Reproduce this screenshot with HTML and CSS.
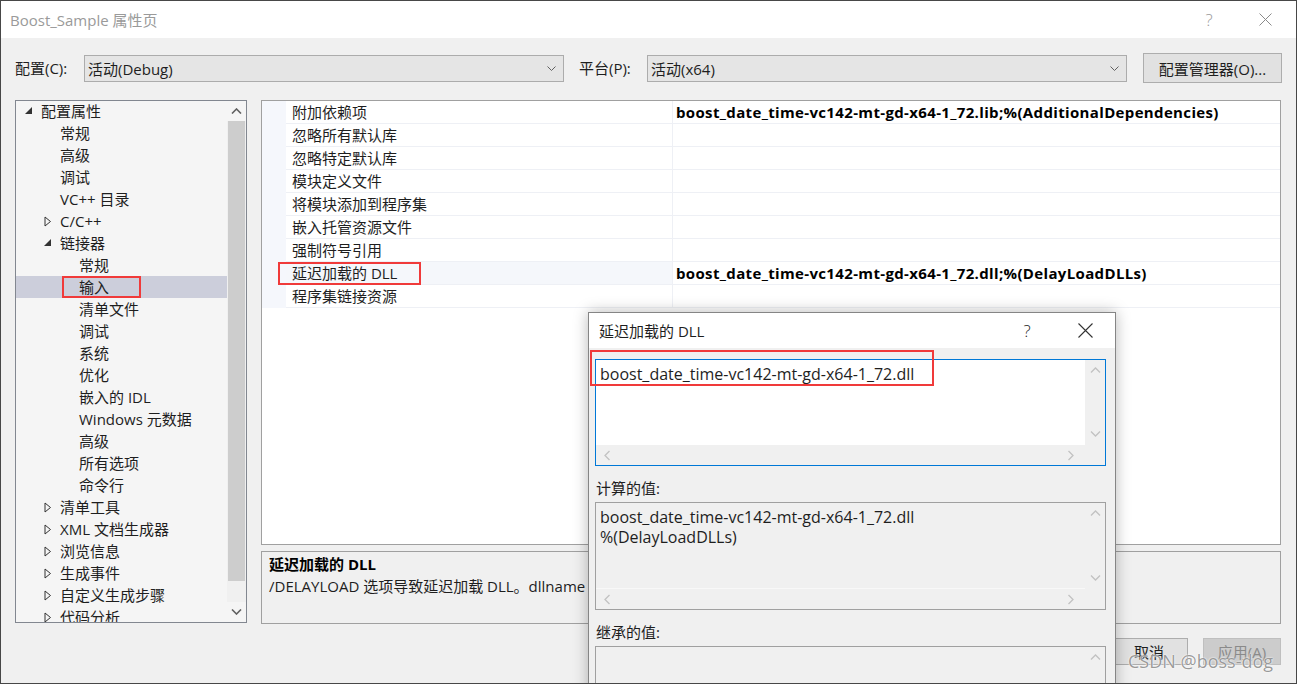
FILE: index.html
```html
<!DOCTYPE html>
<html lang="zh-CN">
<head>
    <meta charset="UTF-8">
    <title>Boost_Sample 属性页</title>
    <link rel="stylesheet" href="styles.css">
</head>
<body>
<div class="window">
    <div class="titlebar">
        <span class="title">Boost_Sample 属性页</span>
        <div class="tb-btns">
            <span class="tb-btn help">?</span>
            <span class="tb-btn"><svg width="13" height="13" viewBox="0 0 13 13"><path d="M0.5 0.5L12.5 12.5M12.5 0.5L0.5 12.5" stroke="#8a8a8a" stroke-width="1"/></svg></span>
        </div>
    </div>

    <div class="config-row">
        <label class="lbl">配置(C):</label>
        <div class="combo"><span>活动(Debug)</span><svg width="9" height="5" viewBox="0 0 9 5"><path d="M0.5 0.5L4.5 4.5L8.5 0.5" fill="none" stroke="#606060"/></svg></div>
        <label class="lbl lbl2">平台(P):</label>
        <div class="combo"><span>活动(x64)</span><svg width="9" height="5" viewBox="0 0 9 5"><path d="M0.5 0.5L4.5 4.5L8.5 0.5" fill="none" stroke="#606060"/></svg></div>
        <button class="btn cfg-btn">配置管理器(O)...</button>
    </div>

    <div class="main">
        <div class="tree">
            <div class="tree-list">
                <div class="node l0"><span class="tog"><svg width="8" height="8" viewBox="0 0 8 8"><path d="M7 0V7H0Z" fill="#333"/></svg></span>配置属性</div>
                <div class="node l1"><span class="tog"></span>常规</div>
                <div class="node l1"><span class="tog"></span>高级</div>
                <div class="node l1"><span class="tog"></span>调试</div>
                <div class="node l1"><span class="tog"></span>VC++ 目录</div>
                <div class="node l1"><span class="tog"><svg width="8" height="11" viewBox="0 0 8 11"><path d="M1 1L6.5 5.5L1 10Z" fill="none" stroke="#333"/></svg></span>C/C++</div>
                <div class="node l1"><span class="tog"><svg width="8" height="8" viewBox="0 0 8 8"><path d="M7 0V7H0Z" fill="#333"/></svg></span>链接器</div>
                <div class="node l2"><span class="tog"></span>常规</div>
                <div class="node l2 selected"><span class="tog"></span><span class="hl hl-tree">输入</span></div>
                <div class="node l2"><span class="tog"></span>清单文件</div>
                <div class="node l2"><span class="tog"></span>调试</div>
                <div class="node l2"><span class="tog"></span>系统</div>
                <div class="node l2"><span class="tog"></span>优化</div>
                <div class="node l2"><span class="tog"></span>嵌入的 IDL</div>
                <div class="node l2"><span class="tog"></span>Windows 元数据</div>
                <div class="node l2"><span class="tog"></span>高级</div>
                <div class="node l2"><span class="tog"></span>所有选项</div>
                <div class="node l2"><span class="tog"></span>命令行</div>
                <div class="node l1"><span class="tog"><svg width="8" height="11" viewBox="0 0 8 11"><path d="M1 1L6.5 5.5L1 10Z" fill="none" stroke="#333"/></svg></span>清单工具</div>
                <div class="node l1"><span class="tog"><svg width="8" height="11" viewBox="0 0 8 11"><path d="M1 1L6.5 5.5L1 10Z" fill="none" stroke="#333"/></svg></span>XML 文档生成器</div>
                <div class="node l1"><span class="tog"><svg width="8" height="11" viewBox="0 0 8 11"><path d="M1 1L6.5 5.5L1 10Z" fill="none" stroke="#333"/></svg></span>浏览信息</div>
                <div class="node l1"><span class="tog"><svg width="8" height="11" viewBox="0 0 8 11"><path d="M1 1L6.5 5.5L1 10Z" fill="none" stroke="#333"/></svg></span>生成事件</div>
                <div class="node l1"><span class="tog"><svg width="8" height="11" viewBox="0 0 8 11"><path d="M1 1L6.5 5.5L1 10Z" fill="none" stroke="#333"/></svg></span>自定义生成步骤</div>
                <div class="node l1"><span class="tog"><svg width="8" height="11" viewBox="0 0 8 11"><path d="M1 1L6.5 5.5L1 10Z" fill="none" stroke="#333"/></svg></span>代码分析</div>
            </div>
            <div class="tree-scroll">
                <div class="arrow"><svg width="11" height="6" viewBox="0 0 11 6"><path d="M1 5.5L5.5 1L10 5.5" fill="none" stroke="#606060" stroke-width="1.6"/></svg></div>
                <div class="thumb-track"><div class="thumb"></div></div>
                <div class="arrow"><svg width="11" height="6" viewBox="0 0 11 6"><path d="M1 0.5L5.5 5L10 0.5" fill="none" stroke="#606060" stroke-width="1.6"/></svg></div>
            </div>
        </div>

        <div class="right">
            <div class="grid">
                <div class="prow"><div class="gut"></div><div class="pname">附加依赖项</div><div class="pval">boost_date_time-vc142-mt-gd-x64-1_72.lib;%(AdditionalDependencies)</div></div>
                <div class="prow"><div class="gut"></div><div class="pname">忽略所有默认库</div><div class="pval"></div></div>
                <div class="prow"><div class="gut"></div><div class="pname">忽略特定默认库</div><div class="pval"></div></div>
                <div class="prow"><div class="gut"></div><div class="pname">模块定义文件</div><div class="pval"></div></div>
                <div class="prow"><div class="gut"></div><div class="pname">将模块添加到程序集</div><div class="pval"></div></div>
                <div class="prow"><div class="gut"></div><div class="pname">嵌入托管资源文件</div><div class="pval"></div></div>
                <div class="prow"><div class="gut"></div><div class="pname">强制符号引用</div><div class="pval"></div></div>
                <div class="prow current"><div class="gut"></div><div class="pname"><span class="hl hl-grid">延迟加载的 DLL</span></div><div class="pval">boost_date_time-vc142-mt-gd-x64-1_72.dll;%(DelayLoadDLLs)</div></div>
                <div class="prow"><div class="gut"></div><div class="pname">程序集链接资源</div><div class="pval"></div></div>
            </div>
            <div class="desc">
                <div class="desc-title">延迟加载的 DLL</div>
                <div class="desc-text">/DELAYLOAD 选项导致延迟加载 DLL。dllname 指定要延迟加载的 DLL。(/DELAYLOAD:[dllname])</div>
            </div>
        </div>
    </div>

    <div class="buttons">
        <button class="btn act">确定</button>
        <button class="btn act">取消</button>
        <button class="btn act disabled">应用(A)</button>
    </div>

    <div class="watermark">CSDN @boss-dog</div>

    <div class="dialog">
        <div class="dlg-title">
            <span>延迟加载的 DLL</span>
            <div class="dlg-btns">
                <span class="dlg-btn help">?</span>
                <span class="dlg-btn"><svg width="15" height="15" viewBox="0 0 15 15"><path d="M0.5 0.5L14.5 14.5M14.5 0.5L0.5 14.5" stroke="#333" stroke-width="1.1"/></svg></span>
            </div>
        </div>
        <div class="dlg-body">
            <div class="editbox active">
                <div class="edit-text"><span class="hl hl-dlg">boost_date_time-vc142-mt-gd-x64-1_72.dll</span></div>
                <div class="vscroll">
                    <svg width="11" height="6" viewBox="0 0 11 6"><path d="M1 5.5L5.5 1L10 5.5" fill="none" stroke="#c2c2c2" stroke-width="1.3"/></svg>
                    <svg width="11" height="6" viewBox="0 0 11 6"><path d="M1 0.5L5.5 5L10 0.5" fill="none" stroke="#c2c2c2" stroke-width="1.3"/></svg>
                </div>
                <div class="hscroll">
                    <svg width="6" height="11" viewBox="0 0 6 11"><path d="M5.5 1L1 5.5L5.5 10" fill="none" stroke="#c2c2c2" stroke-width="1.3"/></svg>
                    <svg width="6" height="11" viewBox="0 0 6 11"><path d="M0.5 1L5 5.5L0.5 10" fill="none" stroke="#c2c2c2" stroke-width="1.3"/></svg>
                </div>
                <div class="corner"></div>
            </div>

            <div class="dlg-label">计算的值:</div>
            <div class="editbox readonly">
                <div class="edit-text">boost_date_time-vc142-mt-gd-x64-1_72.dll<br>%(DelayLoadDLLs)</div>
                <div class="vscroll">
                    <svg width="11" height="6" viewBox="0 0 11 6"><path d="M1 5.5L5.5 1L10 5.5" fill="none" stroke="#c2c2c2" stroke-width="1.3"/></svg>
                    <svg width="11" height="6" viewBox="0 0 11 6"><path d="M1 0.5L5.5 5L10 0.5" fill="none" stroke="#c2c2c2" stroke-width="1.3"/></svg>
                </div>
                <div class="hscroll">
                    <svg width="6" height="11" viewBox="0 0 6 11"><path d="M5.5 1L1 5.5L5.5 10" fill="none" stroke="#c2c2c2" stroke-width="1.3"/></svg>
                    <svg width="6" height="11" viewBox="0 0 6 11"><path d="M0.5 1L5 5.5L0.5 10" fill="none" stroke="#c2c2c2" stroke-width="1.3"/></svg>
                </div>
                <div class="corner"></div>
            </div>

            <div class="dlg-label">继承的值:</div>
            <div class="editbox readonly inherit">
                <div class="edit-text"></div>
                <div class="vscroll">
                    <svg width="11" height="6" viewBox="0 0 11 6"><path d="M1 5.5L5.5 1L10 5.5" fill="none" stroke="#c2c2c2" stroke-width="1.3"/></svg>
                    <svg width="11" height="6" viewBox="0 0 11 6"><path d="M1 0.5L5.5 5L10 0.5" fill="none" stroke="#c2c2c2" stroke-width="1.3"/></svg>
                </div>
                <div class="hscroll"></div>
                <div class="corner"></div>
            </div>
        </div>
    </div>
</div>
</body>
</html>
```

FILE: styles.css
```css
* {
    box-sizing: border-box;
}
body {
    margin: 0;
    font-family: "Open Sans", "Noto Sans CJK SC", sans-serif;
    font-size: 15px;
    color: #1e1e1e;
    overflow: hidden;
}
.window {
    position: relative;
    width: 1297px;
    height: 684px;
    border: 1px solid #474747;
    background-color: #f0f0f0;
    overflow: hidden;
}

/* title bar */
.titlebar {
    height: 37px;
    background-color: #fff;
    display: flex;
    align-items: center;
    padding-left: 9px;
}
.title {
    color: #9a9a9a;
}
.tb-btns {
    margin-left: auto;
    display: flex;
    padding-right: 3px;
}
.tb-btn {
    width: 56px;
    height: 37px;
    display: flex;
    align-items: center;
    justify-content: center;
}
.tb-btn.help {
    color: #9a9a9a;
    font-size: 17px;
    font-weight: 300;
}

/* config row */
.config-row {
    height: 62px;
    display: flex;
    align-items: flex-start;
    padding: 17px 0 0 14px;
}
.lbl {
    width: 69px;
    line-height: 26px;
}
.lbl2 {
    margin-left: 15px;
    width: 68px;
}
.combo {
    width: 480px;
    height: 27px;
    border: 1px solid #acacac;
    background-color: #e5e5e5;
    display: flex;
    align-items: center;
    justify-content: space-between;
    padding: 0 7px 1px 3px;
}
.btn {
    font-family: inherit;
    font-size: 15px;
    color: #1e1e1e;
    background-color: #e1e1e1;
    border: 1px solid #adadad;
    padding: 0;
}
.cfg-btn {
    margin: -2px 0 0 16px;
    width: 139px;
    height: 30px;
}

/* main area */
.main {
    display: flex;
    padding-left: 14px;
}
.tree {
    width: 232px;
    height: 523px;
    border: 1px solid #828790;
    background-color: #f5f5f5;
    display: flex;
}
.tree-list {
    flex: 1;
    overflow: hidden;
    margin-top: -1px;
}
.node {
    height: 22px;
    line-height: 22px;
    white-space: nowrap;
    display: flex;
    align-items: center;
}
.node.l0 { padding-left: 9px; }
.node.l1 { padding-left: 28px; }
.node.l2 { padding-left: 47px; }
.node.selected {
    background-color: #cccedb;
}
.tog {
    width: 16px;
    flex-shrink: 0;
    display: flex;
    align-items: center;
}
.tree-scroll {
    width: 19px;
    display: flex;
    flex-direction: column;
    background-color: #f0f0f0;
}
.arrow {
    height: 20px;
    display: flex;
    align-items: center;
    justify-content: center;
    background-color: #f5f5f5;
}
.thumb-track {
    flex: 1;
    padding-bottom: 21px;
}
.thumb {
    height: 100%;
    margin: 0 1px;
    background-color: #cdcdcd;
}

/* highlight boxes */
.hl {
    position: relative;
    display: inline-block;
    height: 22px;
    line-height: 22px;
}
.hl::after {
    content: "";
    position: absolute;
    border: 2px solid #f03a3a;
}
.hl-tree::after {
    top: 0;
    bottom: 0;
    left: -17px;
    right: -32px;
}
.hl-grid::after {
    top: 0;
    bottom: -1px;
    left: -14px;
    right: -24px;
}
.hl-dlg::after {
    top: -13px;
    bottom: -1px;
    left: -10px;
    right: -20px;
}

/* property grid */
.right {
    margin-left: 14px;
    width: 1020px;
}
.grid {
    height: 445px;
    border: 1px solid #a0a0a0;
    background-color: #fff;
}
.prow {
    display: flex;
    height: 23px;
}
.gut {
    width: 24px;
    background-color: #f5f7fc;
}
.pname {
    width: 386px;
    padding-left: 6px;
    line-height: 22px;
    border-bottom: 1px solid #eef0f5;
    white-space: nowrap;
}
.pval {
    flex: 1;
    padding-left: 3px;
    line-height: 22px;
    font-weight: bold;
    letter-spacing: 0.35px;
    color: #000;
    border-left: 1px solid #eef0f5;
    border-bottom: 1px solid #eef0f5;
    white-space: nowrap;
}
.prow.current .pname {
    background-color: #f5f7fb;
}
.desc {
    margin-top: 6px;
    height: 73px;
    border: 1px solid #a0a0a0;
    padding: 1px 7px;
    line-height: 22px;
    white-space: nowrap;
    overflow: hidden;
}
.desc-title {
    font-weight: bold;
    color: #000;
}

/* bottom buttons */
.buttons {
    margin-top: 14px;
    display: flex;
    justify-content: flex-end;
    gap: 15px;
    padding-right: 15px;
}
.act {
    width: 78px;
    height: 27px;
}
.act.disabled {
    background-color: #cccccc;
    border-color: #bfbfbf;
    color: #8a8a8a;
}
.watermark {
    position: absolute;
    left: 1127px;
    top: 648px;
    font-size: 18px;
    color: rgba(120, 120, 120, 0.75);
    text-shadow: 0 0 2px #fff, 0 0 1px #fff;
}

/* child dialog */
.dialog {
    position: absolute;
    left: 587px;
    top: 311px;
    width: 528px;
    height: 420px;
    border: 1px solid #858585;
    background-color: #f0f0f0;
    box-shadow: 0 0 14px rgba(0, 0, 0, 0.28);
}
.dlg-title {
    height: 35px;
    background-color: #fff;
    display: flex;
    align-items: center;
    padding: 0 0 1px 10px;
}
.dlg-btns {
    margin-left: auto;
    display: flex;
    gap: 12px;
    padding-right: 7px;
}
.dlg-btn {
    width: 46px;
    height: 35px;
    display: flex;
    align-items: center;
    justify-content: center;
}
.dlg-btn.help {
    font-size: 17px;
    font-weight: 300;
}
.dlg-body {
    padding: 11px 9px 0 6px;
}
.editbox {
    height: 107px;
    border: 1px solid #a0a0a0;
    display: grid;
    grid-template-columns: 1fr 20px;
    grid-template-rows: 1fr 20px;
}
.editbox.active {
    border-color: #0078d7;
}
.editbox.active .edit-text {
    background-color: #fff;
}
.editbox.readonly {
    height: 108px;
}
.editbox.inherit {
    height: 100px;
}
.edit-text {
    padding: 3px 4px;
    font-size: 16px;
    line-height: 20px;
    white-space: nowrap;
}
.editbox.readonly .edit-text {
    padding-top: 4px;
    border-bottom: 1px solid #f8f8f8;
}
.vscroll {
    display: flex;
    flex-direction: column;
    justify-content: space-between;
    align-items: center;
    padding: 7px 0 8px;
    background-color: #f0f0f0;
}
.hscroll {
    display: flex;
    justify-content: space-between;
    align-items: center;
    padding: 0 11px 0 8px;
    background-color: #f0f0f0;
}
.corner {
    background-color: #f0f0f0;
}
.dlg-label {
    margin-top: 11px;
    margin-bottom: 3px;
    line-height: 22px;
    padding-left: 1px;
}
```
